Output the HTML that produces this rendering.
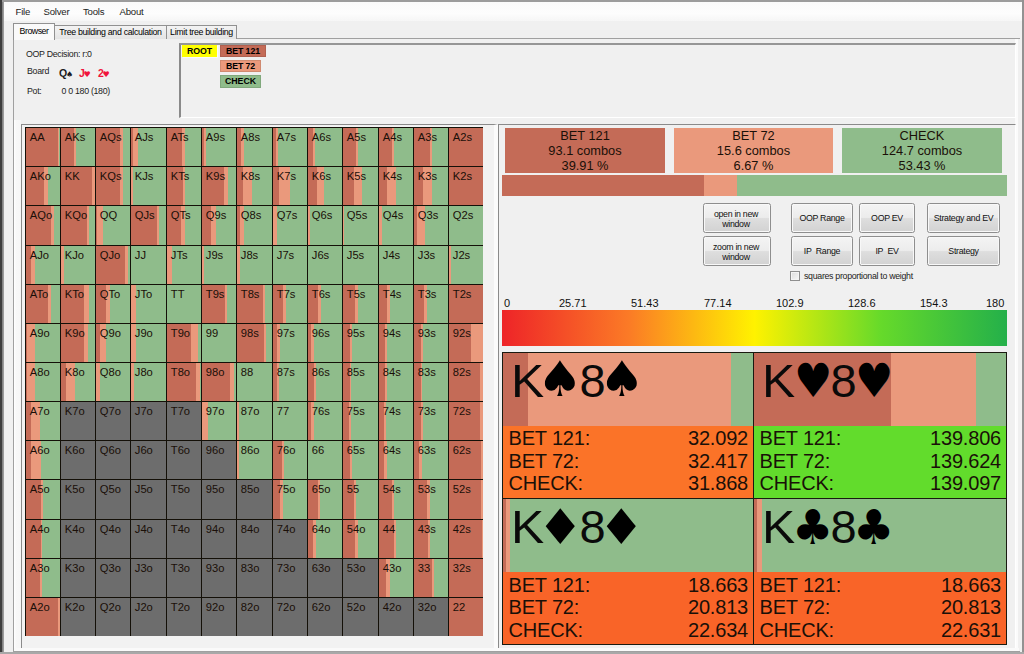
<!DOCTYPE html>
<html><head><meta charset="utf-8"><title>Browser</title>
<style>
html,body{margin:0;padding:0}
body{width:1024px;height:654px;overflow:hidden;background:#f0f0f0;position:relative;font-family:"Liberation Sans",sans-serif;font-size:8.8px;color:#000}
.a{position:absolute}
.t{position:absolute;white-space:nowrap;line-height:12px;letter-spacing:-0.3px;color:#1c1c22}
.m{letter-spacing:-0.2px}
.s{letter-spacing:0;font-size:11px;color:#111}
.c{position:absolute;border-left:1px solid #141008;border-top:1px solid #141008;font-size:11.2px;line-height:13px;padding:2.7px 0 0 3.8px;box-sizing:content-box;overflow:hidden;white-space:nowrap;color:#1a0f08}
.c{box-sizing:border-box}
.btn{position:absolute;border:1px solid #8e8e8e;border-radius:2.5px;background:linear-gradient(#f4f4f4 0,#ececec 48%,#dedede 52%,#d2d2d2 100%);box-shadow:inset 0 0 0 1px #f8f8f8;text-align:center;font-size:8.8px;letter-spacing:-0.3px;line-height:10px;display:flex;align-items:center;justify-content:center;box-sizing:border-box;color:#111}
.sum{position:absolute;text-align:center;font-size:12.8px;line-height:14.7px;box-sizing:border-box;padding-top:1.2px;color:#1a1008}
.hp{position:absolute;border-left:1px solid #1a1a10;border-top:1px solid #1a1a10;box-sizing:border-box}
.hc{position:relative;white-space:nowrap;overflow:hidden}
.hk{position:absolute;top:2.1px;font-size:47px;line-height:52px;transform-origin:0 0;color:#0a0a0a}
.hs{position:absolute;top:0.9px;font-family:"DejaVu Sans",sans-serif;font-size:49px;line-height:52px;transform-origin:0 0;color:#000}
.ev{box-sizing:border-box;padding:1px 5px 0 5.6px;font-size:20px;letter-spacing:-0.2px;line-height:22.65px;color:#1a1008}
.er{display:flex;justify-content:space-between}
.tab{position:absolute;letter-spacing:-0.32px;box-sizing:border-box;border:1px solid #919191;border-bottom:none;background:linear-gradient(#f3f3f3,#e4e4e4);font-size:8.8px;line-height:12px;text-align:center;white-space:nowrap}
.tb{position:absolute;letter-spacing:-0.1px;box-sizing:border-box;font-weight:bold;font-size:8.8px;line-height:11px;text-align:center;white-space:nowrap}
</style></head><body>
<!-- window frame -->
<div class="a" style="left:0;top:0;width:1024px;height:2px;background:#9c9c9c"></div>
<div class="a" style="left:2px;top:2px;width:1020px;height:19px;background:linear-gradient(#fafafa,#fdfdfd 60%,#f6f6f6)"></div>
<div class="a" style="left:0;top:0;width:2px;height:654px;background:#3e3e3e"></div>
<div class="a" style="left:2px;top:2px;width:2px;height:652px;background:linear-gradient(90deg,#777,#a8a8a8)"></div>
<div class="a" style="left:1018px;top:38px;width:2px;height:614px;background:#c2c2c2"></div>
<div class="a" style="left:1022px;top:0;width:2px;height:654px;background:#929292"></div>
<div class="a" style="left:0;top:652px;width:1024px;height:2px;background:#a8a8a8"></div>
<!-- menu -->
<div class="t m" style="left:15.5px;top:5.6px;font-size:9.6px">File</div>
<div class="t m" style="left:43.5px;top:5.6px;font-size:9.6px">Solver</div>
<div class="t m" style="left:83px;top:5.6px;font-size:9.6px">Tools</div>
<div class="t m" style="left:119.5px;top:5.6px;font-size:9.6px">About</div>
<!-- tab page -->
<div class="a" style="left:13px;top:38px;width:1007px;height:614px;border:1px solid #a0a0a0;border-right:none;box-sizing:border-box;background:#f0f0f0"></div>
<div class="a" style="left:14px;top:120px;width:7px;height:531px;background:linear-gradient(90deg,#fff,#f8f8f8 30%,#f6f6f6)"></div>
<div class="a" style="left:1015px;top:39px;width:3px;height:612px;background:#fbfbfb"></div>
<div class="a" style="left:14px;top:648px;width:1005px;height:3px;background:#fafafa"></div>
<div class="tab" style="left:54px;top:25px;width:113px;height:14px;padding-top:0.3px">Tree building and calculation</div>
<div class="tab" style="left:166px;top:25px;width:71px;height:14px;padding-top:0.3px">Limit tree building</div>
<div class="tab" style="left:13px;top:23px;width:42px;height:17px;background:#fafafa;letter-spacing:-0.5px;padding-top:1px">Browser</div>
<!-- info -->
<div class="t" style="left:26px;top:48px">OOP Decision: r:0</div>
<div class="t" style="left:27px;top:65px">Board</div>
<div class="t" style="left:59px;top:67px;font-weight:bold;font-size:10.5px">Q<span style="font-family:'DejaVu Sans',sans-serif;font-size:8px;margin-left:-1px">♠</span></div>
<div class="t" style="left:79px;top:67px;font-weight:bold;font-size:10.5px;color:#f0143c">J<span style="font-family:'DejaVu Sans',sans-serif;font-size:8px;margin-left:-1px">♥</span></div>
<div class="t" style="left:98px;top:67px;font-weight:bold;font-size:10.5px;color:#f0143c">2<span style="font-family:'DejaVu Sans',sans-serif;font-size:8px;margin-left:-1px">♥</span></div>
<div class="t" style="left:27px;top:84.7px">Pot:</div>
<div class="t" style="left:61.5px;top:84.7px">0 0 180 (180)</div>
<!-- tree panel -->
<div class="a" style="left:179px;top:43px;width:837px;height:75px;box-sizing:border-box;border-top:2px solid #969696;border-left:2px solid #8a8a8a;border-right:1px solid #fff;border-bottom:1px solid #fff"></div>
<div class="tb" style="left:182px;top:45px;width:35px;height:12px;background:#ffff00;padding-top:0.5px;box-shadow:1px 1px 0 #fafafa">ROOT</div>
<div class="tb" style="left:220px;top:45px;width:46px;height:12px;background:#c46b57;border:1px solid #b06050;line-height:10px">BET 121</div>
<div class="tb" style="left:220px;top:60px;width:41px;height:12px;background:#ea997c;border:1px solid #d08a70;line-height:10px">BET 72</div>
<div class="tb" style="left:220px;top:75px;width:41px;height:13px;background:#8fbc8b;border:1px solid #80a87c;line-height:11px">CHECK</div>
<!-- grid panel -->
<div class="a" style="left:21px;top:124px;width:477px;height:524px;box-sizing:border-box;border-top:1px solid #8a8a8a;border-left:1px solid #8a8a8a;border-right:4px solid #fbfbfb;background:#f2f2f2"></div>
<div class="c" style="left:25px;top:127px;width:35px;height:39px;background:linear-gradient(90deg,#c46b57 0 93.0%,#ea997c 93.0% 96.5%,#8fbc8b 96.5% 100%)">AA</div>
<div class="c" style="left:60px;top:127px;width:35px;height:39px;background:linear-gradient(90deg,#c46b57 0 38.0%,#ea997c 38.0% 45.0%,#8fbc8b 45.0% 100%)">AKs</div>
<div class="c" style="left:95px;top:127px;width:35px;height:39px;background:linear-gradient(90deg,#c46b57 0 72.0%,#ea997c 72.0% 78.0%,#8fbc8b 78.0% 100%)">AQs</div>
<div class="c" style="left:130px;top:127px;width:36px;height:39px;background:linear-gradient(90deg,#c46b57 0 7.0%,#ea997c 7.0% 19.0%,#8fbc8b 19.0% 100%)">AJs</div>
<div class="c" style="left:166px;top:127px;width:35px;height:39px;background:linear-gradient(90deg,#c46b57 0 44.0%,#ea997c 44.0% 52.0%,#8fbc8b 52.0% 100%)">ATs</div>
<div class="c" style="left:201px;top:127px;width:35px;height:39px;background:linear-gradient(90deg,#c46b57 0 6.0%,#ea997c 6.0% 13.0%,#8fbc8b 13.0% 100%)">A9s</div>
<div class="c" style="left:236px;top:127px;width:36px;height:39px;background:linear-gradient(90deg,#c46b57 0 12.0%,#ea997c 12.0% 20.0%,#8fbc8b 20.0% 100%)">A8s</div>
<div class="c" style="left:272px;top:127px;width:35px;height:39px;background:linear-gradient(90deg,#c46b57 0 8.0%,#ea997c 8.0% 16.0%,#8fbc8b 16.0% 100%)">A7s</div>
<div class="c" style="left:307px;top:127px;width:35px;height:39px;background:linear-gradient(90deg,#c46b57 0 16.0%,#ea997c 16.0% 22.0%,#8fbc8b 22.0% 100%)">A6s</div>
<div class="c" style="left:342px;top:127px;width:36px;height:39px;background:linear-gradient(90deg,#c46b57 0 36.0%,#ea997c 36.0% 43.0%,#8fbc8b 43.0% 100%)">A5s</div>
<div class="c" style="left:378px;top:127px;width:35px;height:39px;background:linear-gradient(90deg,#c46b57 0 38.0%,#ea997c 38.0% 45.0%,#8fbc8b 45.0% 100%)">A4s</div>
<div class="c" style="left:413px;top:127px;width:35px;height:39px;background:linear-gradient(90deg,#c46b57 0 47.0%,#ea997c 47.0% 54.0%,#8fbc8b 54.0% 100%)">A3s</div>
<div class="c" style="left:448px;top:127px;width:35px;height:39px;background:#c46b57">A2s</div>
<div class="c" style="left:25px;top:166px;width:35px;height:39px;background:linear-gradient(90deg,#c46b57 0 54.0%,#ea997c 54.0% 64.0%,#8fbc8b 64.0% 100%)">AKo</div>
<div class="c" style="left:60px;top:166px;width:35px;height:39px;background:linear-gradient(90deg,#c46b57 0 90.0%,#ea997c 90.0% 100.0%)">KK</div>
<div class="c" style="left:95px;top:166px;width:35px;height:39px;background:linear-gradient(90deg,#c46b57 0 72.0%,#ea997c 72.0% 80.0%,#8fbc8b 80.0% 100%)">KQs</div>
<div class="c" style="left:130px;top:166px;width:36px;height:39px;background:linear-gradient(90deg,#ea997c 0.0% 6.0%,#8fbc8b 6.0% 100%)">KJs</div>
<div class="c" style="left:166px;top:166px;width:35px;height:39px;background:linear-gradient(90deg,#c46b57 0 47.0%,#ea997c 47.0% 54.0%,#8fbc8b 54.0% 100%)">KTs</div>
<div class="c" style="left:201px;top:166px;width:35px;height:39px;background:linear-gradient(90deg,#c46b57 0 64.0%,#ea997c 64.0% 76.0%,#8fbc8b 76.0% 100%)">K9s</div>
<div class="c" style="left:236px;top:166px;width:36px;height:39px;background:linear-gradient(90deg,#c46b57 0 16.0%,#ea997c 16.0% 43.0%,#8fbc8b 43.0% 100%)">K8s</div>
<div class="c" style="left:272px;top:166px;width:35px;height:39px;background:linear-gradient(90deg,#c46b57 0 18.0%,#ea997c 18.0% 50.0%,#8fbc8b 50.0% 100%)">K7s</div>
<div class="c" style="left:307px;top:166px;width:35px;height:39px;background:linear-gradient(90deg,#c46b57 0 26.0%,#ea997c 26.0% 48.0%,#8fbc8b 48.0% 100%)">K6s</div>
<div class="c" style="left:342px;top:166px;width:36px;height:39px;background:linear-gradient(90deg,#c46b57 0 32.0%,#ea997c 32.0% 53.0%,#8fbc8b 53.0% 100%)">K5s</div>
<div class="c" style="left:378px;top:166px;width:35px;height:39px;background:linear-gradient(90deg,#c46b57 0 25.0%,#ea997c 25.0% 50.0%,#8fbc8b 50.0% 100%)">K4s</div>
<div class="c" style="left:413px;top:166px;width:35px;height:39px;background:linear-gradient(90deg,#c46b57 0 25.0%,#ea997c 25.0% 52.0%,#8fbc8b 52.0% 100%)">K3s</div>
<div class="c" style="left:448px;top:166px;width:35px;height:39px;background:#c46b57">K2s</div>
<div class="c" style="left:25px;top:205px;width:35px;height:40px;background:linear-gradient(90deg,#c46b57 0 75.0%,#ea997c 75.0% 82.0%,#8fbc8b 82.0% 100%)">AQo</div>
<div class="c" style="left:60px;top:205px;width:35px;height:40px;background:linear-gradient(90deg,#c46b57 0 76.0%,#ea997c 76.0% 83.0%,#8fbc8b 83.0% 100%)">KQo</div>
<div class="c" style="left:95px;top:205px;width:35px;height:40px;background:linear-gradient(90deg,#c46b57 0 3.0%,#ea997c 3.0% 22.0%,#8fbc8b 22.0% 100%)">QQ</div>
<div class="c" style="left:130px;top:205px;width:36px;height:40px;background:linear-gradient(90deg,#c46b57 0 74.0%,#ea997c 74.0% 81.0%,#8fbc8b 81.0% 100%)">QJs</div>
<div class="c" style="left:166px;top:205px;width:35px;height:40px;background:linear-gradient(90deg,#c46b57 0 40.0%,#ea997c 40.0% 54.0%,#8fbc8b 54.0% 100%)">QTs</div>
<div class="c" style="left:201px;top:205px;width:35px;height:40px;background:linear-gradient(90deg,#c46b57 0 26.0%,#ea997c 26.0% 40.0%,#8fbc8b 40.0% 100%)">Q9s</div>
<div class="c" style="left:236px;top:205px;width:36px;height:40px;background:linear-gradient(90deg,#c46b57 0 10.0%,#ea997c 10.0% 19.0%,#8fbc8b 19.0% 100%)">Q8s</div>
<div class="c" style="left:272px;top:205px;width:35px;height:40px;background:linear-gradient(90deg,#c46b57 0 1.0%,#ea997c 1.0% 11.0%,#8fbc8b 11.0% 100%)">Q7s</div>
<div class="c" style="left:307px;top:205px;width:35px;height:40px;background:linear-gradient(90deg,#ea997c 0.0% 5.0%,#8fbc8b 5.0% 100%)">Q6s</div>
<div class="c" style="left:342px;top:205px;width:36px;height:40px;background:linear-gradient(90deg,#ea997c 0.0% 4.0%,#8fbc8b 4.0% 100%)">Q5s</div>
<div class="c" style="left:378px;top:205px;width:35px;height:40px;background:linear-gradient(90deg,#ea997c 0.0% 9.0%,#8fbc8b 9.0% 100%)">Q4s</div>
<div class="c" style="left:413px;top:205px;width:35px;height:40px;background:linear-gradient(90deg,#c46b57 0 9.0%,#ea997c 9.0% 32.0%,#8fbc8b 32.0% 100%)">Q3s</div>
<div class="c" style="left:448px;top:205px;width:35px;height:40px;background:#8fbc8b">Q2s</div>
<div class="c" style="left:25px;top:245px;width:35px;height:39px;background:linear-gradient(90deg,#c46b57 0 15.0%,#ea997c 15.0% 27.0%,#8fbc8b 27.0% 100%)">AJo</div>
<div class="c" style="left:60px;top:245px;width:35px;height:39px;background:linear-gradient(90deg,#ea997c 0.0% 10.0%,#8fbc8b 10.0% 100%)">KJo</div>
<div class="c" style="left:95px;top:245px;width:35px;height:39px;background:linear-gradient(90deg,#c46b57 0 86.0%,#ea997c 86.0% 95.0%,#8fbc8b 95.0% 100%)">QJo</div>
<div class="c" style="left:130px;top:245px;width:36px;height:39px;background:#8fbc8b">JJ</div>
<div class="c" style="left:166px;top:245px;width:35px;height:39px;background:linear-gradient(90deg,#ea997c 0.0% 15.0%,#8fbc8b 15.0% 100%)">JTs</div>
<div class="c" style="left:201px;top:245px;width:35px;height:39px;background:linear-gradient(90deg,#ea997c 0.0% 5.0%,#8fbc8b 5.0% 100%)">J9s</div>
<div class="c" style="left:236px;top:245px;width:36px;height:39px;background:linear-gradient(90deg,#ea997c 0.0% 7.5%,#8fbc8b 7.5% 100%)">J8s</div>
<div class="c" style="left:272px;top:245px;width:35px;height:39px;background:#8fbc8b">J7s</div>
<div class="c" style="left:307px;top:245px;width:35px;height:39px;background:#8fbc8b">J6s</div>
<div class="c" style="left:342px;top:245px;width:36px;height:39px;background:#8fbc8b">J5s</div>
<div class="c" style="left:378px;top:245px;width:35px;height:39px;background:#8fbc8b">J4s</div>
<div class="c" style="left:413px;top:245px;width:35px;height:39px;background:#8fbc8b">J3s</div>
<div class="c" style="left:448px;top:245px;width:35px;height:39px;background:linear-gradient(90deg,#ea997c 0.0% 7.0%,#8fbc8b 7.0% 100%)">J2s</div>
<div class="c" style="left:25px;top:284px;width:35px;height:39px;background:linear-gradient(90deg,#c46b57 0 66.0%,#ea997c 66.0% 74.0%,#8fbc8b 74.0% 100%)">ATo</div>
<div class="c" style="left:60px;top:284px;width:35px;height:39px;background:linear-gradient(90deg,#c46b57 0 69.0%,#ea997c 69.0% 81.0%,#8fbc8b 81.0% 100%)">KTo</div>
<div class="c" style="left:95px;top:284px;width:35px;height:39px;background:linear-gradient(90deg,#c46b57 0 30.0%,#ea997c 30.0% 40.0%,#8fbc8b 40.0% 100%)">QTo</div>
<div class="c" style="left:130px;top:284px;width:36px;height:39px;background:linear-gradient(90deg,#ea997c 0.0% 15.0%,#8fbc8b 15.0% 100%)">JTo</div>
<div class="c" style="left:166px;top:284px;width:35px;height:39px;background:#8fbc8b">TT</div>
<div class="c" style="left:201px;top:284px;width:35px;height:39px;background:linear-gradient(90deg,#c46b57 0 68.0%,#ea997c 68.0% 75.0%,#8fbc8b 75.0% 100%)">T9s</div>
<div class="c" style="left:236px;top:284px;width:36px;height:39px;background:linear-gradient(90deg,#c46b57 0 74.0%,#ea997c 74.0% 81.0%,#8fbc8b 81.0% 100%)">T8s</div>
<div class="c" style="left:272px;top:284px;width:35px;height:39px;background:linear-gradient(90deg,#c46b57 0 29.0%,#ea997c 29.0% 39.0%,#8fbc8b 39.0% 100%)">T7s</div>
<div class="c" style="left:307px;top:284px;width:35px;height:39px;background:linear-gradient(90deg,#c46b57 0 30.0%,#ea997c 30.0% 37.0%,#8fbc8b 37.0% 100%)">T6s</div>
<div class="c" style="left:342px;top:284px;width:36px;height:39px;background:linear-gradient(90deg,#c46b57 0 34.0%,#ea997c 34.0% 42.0%,#8fbc8b 42.0% 100%)">T5s</div>
<div class="c" style="left:378px;top:284px;width:35px;height:39px;background:linear-gradient(90deg,#c46b57 0 24.0%,#ea997c 24.0% 32.0%,#8fbc8b 32.0% 100%)">T4s</div>
<div class="c" style="left:413px;top:284px;width:35px;height:39px;background:linear-gradient(90deg,#c46b57 0 28.0%,#ea997c 28.0% 37.0%,#8fbc8b 37.0% 100%)">T3s</div>
<div class="c" style="left:448px;top:284px;width:35px;height:39px;background:#c46b57">T2s</div>
<div class="c" style="left:25px;top:323px;width:35px;height:39px;background:linear-gradient(90deg,#c46b57 0 4.0%,#ea997c 4.0% 27.0%,#8fbc8b 27.0% 100%)">A9o</div>
<div class="c" style="left:60px;top:323px;width:35px;height:39px;background:linear-gradient(90deg,#c46b57 0 67.0%,#ea997c 67.0% 79.0%,#8fbc8b 79.0% 100%)">K9o</div>
<div class="c" style="left:95px;top:323px;width:35px;height:39px;background:linear-gradient(90deg,#c46b57 0 12.0%,#ea997c 12.0% 28.0%,#8fbc8b 28.0% 100%)">Q9o</div>
<div class="c" style="left:130px;top:323px;width:36px;height:39px;background:linear-gradient(90deg,#ea997c 0.0% 13.0%,#8fbc8b 13.0% 100%)">J9o</div>
<div class="c" style="left:166px;top:323px;width:35px;height:39px;background:linear-gradient(90deg,#c46b57 0 70.0%,#ea997c 70.0% 90.0%,#8fbc8b 90.0% 100%)">T9o</div>
<div class="c" style="left:201px;top:323px;width:35px;height:39px;background:#8fbc8b">99</div>
<div class="c" style="left:236px;top:323px;width:36px;height:39px;background:linear-gradient(90deg,#c46b57 0 76.0%,#ea997c 76.0% 84.0%,#8fbc8b 84.0% 100%)">98s</div>
<div class="c" style="left:272px;top:323px;width:35px;height:39px;background:linear-gradient(90deg,#c46b57 0 13.0%,#ea997c 13.0% 21.0%,#8fbc8b 21.0% 100%)">97s</div>
<div class="c" style="left:307px;top:323px;width:35px;height:39px;background:linear-gradient(90deg,#c46b57 0 9.0%,#ea997c 9.0% 17.0%,#8fbc8b 17.0% 100%)">96s</div>
<div class="c" style="left:342px;top:323px;width:36px;height:39px;background:linear-gradient(90deg,#c46b57 0 21.0%,#ea997c 21.0% 27.0%,#8fbc8b 27.0% 100%)">95s</div>
<div class="c" style="left:378px;top:323px;width:35px;height:39px;background:linear-gradient(90deg,#c46b57 0 17.0%,#ea997c 17.0% 23.0%,#8fbc8b 23.0% 100%)">94s</div>
<div class="c" style="left:413px;top:323px;width:35px;height:39px;background:linear-gradient(90deg,#c46b57 0 21.0%,#ea997c 21.0% 25.0%,#8fbc8b 25.0% 100%)">93s</div>
<div class="c" style="left:448px;top:323px;width:35px;height:39px;background:linear-gradient(90deg,#c46b57 0 65.0%,#ea997c 65.0% 100.0%)">92s</div>
<div class="c" style="left:25px;top:362px;width:35px;height:39px;background:linear-gradient(90deg,#c46b57 0 2.0%,#ea997c 2.0% 26.0%,#8fbc8b 26.0% 100%)">A8o</div>
<div class="c" style="left:60px;top:362px;width:35px;height:39px;background:linear-gradient(90deg,#c46b57 0 15.0%,#ea997c 15.0% 40.0%,#8fbc8b 40.0% 100%)">K8o</div>
<div class="c" style="left:95px;top:362px;width:35px;height:39px;background:linear-gradient(90deg,#ea997c 0.0% 12.0%,#8fbc8b 12.0% 100%)">Q8o</div>
<div class="c" style="left:130px;top:362px;width:36px;height:39px;background:linear-gradient(90deg,#ea997c 0.0% 8.0%,#8fbc8b 8.0% 100%)">J8o</div>
<div class="c" style="left:166px;top:362px;width:35px;height:39px;background:linear-gradient(90deg,#c46b57 0 86.0%,#ea997c 86.0% 98.0%,#8fbc8b 98.0% 100%)">T8o</div>
<div class="c" style="left:201px;top:362px;width:35px;height:39px;background:linear-gradient(90deg,#c46b57 0 81.0%,#ea997c 81.0% 93.0%,#8fbc8b 93.0% 100%)">98o</div>
<div class="c" style="left:236px;top:362px;width:36px;height:39px;background:#8fbc8b">88</div>
<div class="c" style="left:272px;top:362px;width:35px;height:39px;background:linear-gradient(90deg,#c46b57 0 13.0%,#ea997c 13.0% 17.0%,#8fbc8b 17.0% 100%)">87s</div>
<div class="c" style="left:307px;top:362px;width:35px;height:39px;background:linear-gradient(90deg,#c46b57 0 18.0%,#ea997c 18.0% 23.0%,#8fbc8b 23.0% 100%)">86s</div>
<div class="c" style="left:342px;top:362px;width:36px;height:39px;background:linear-gradient(90deg,#c46b57 0 20.0%,#ea997c 20.0% 24.0%,#8fbc8b 24.0% 100%)">85s</div>
<div class="c" style="left:378px;top:362px;width:35px;height:39px;background:linear-gradient(90deg,#c46b57 0 19.0%,#ea997c 19.0% 23.0%,#8fbc8b 23.0% 100%)">84s</div>
<div class="c" style="left:413px;top:362px;width:35px;height:39px;background:linear-gradient(90deg,#c46b57 0 21.0%,#ea997c 21.0% 24.0%,#8fbc8b 24.0% 100%)">83s</div>
<div class="c" style="left:448px;top:362px;width:35px;height:39px;background:linear-gradient(90deg,#c46b57 0 90.0%,#ea997c 90.0% 100.0%)">82s</div>
<div class="c" style="left:25px;top:401px;width:35px;height:39px;background:linear-gradient(90deg,#c46b57 0 14.0%,#ea997c 14.0% 41.0%,#8fbc8b 41.0% 100%)">A7o</div>
<div class="c" style="left:60px;top:401px;width:35px;height:39px;background:#6d6d6d">K7o</div>
<div class="c" style="left:95px;top:401px;width:35px;height:39px;background:#6d6d6d">Q7o</div>
<div class="c" style="left:130px;top:401px;width:36px;height:39px;background:#6d6d6d">J7o</div>
<div class="c" style="left:166px;top:401px;width:35px;height:39px;background:#6d6d6d">T7o</div>
<div class="c" style="left:201px;top:401px;width:35px;height:39px;background:linear-gradient(90deg,#ea997c 0.0% 17.0%,#8fbc8b 17.0% 100%)">97o</div>
<div class="c" style="left:236px;top:401px;width:36px;height:39px;background:linear-gradient(90deg,#ea997c 0.0% 5.0%,#8fbc8b 5.0% 100%)">87o</div>
<div class="c" style="left:272px;top:401px;width:35px;height:39px;background:#8fbc8b">77</div>
<div class="c" style="left:307px;top:401px;width:35px;height:39px;background:linear-gradient(90deg,#c46b57 0 9.0%,#ea997c 9.0% 18.0%,#8fbc8b 18.0% 100%)">76s</div>
<div class="c" style="left:342px;top:401px;width:36px;height:39px;background:linear-gradient(90deg,#c46b57 0 16.0%,#ea997c 16.0% 22.0%,#8fbc8b 22.0% 100%)">75s</div>
<div class="c" style="left:378px;top:401px;width:35px;height:39px;background:linear-gradient(90deg,#c46b57 0 14.0%,#ea997c 14.0% 22.0%,#8fbc8b 22.0% 100%)">74s</div>
<div class="c" style="left:413px;top:401px;width:35px;height:39px;background:linear-gradient(90deg,#c46b57 0 20.0%,#ea997c 20.0% 25.0%,#8fbc8b 25.0% 100%)">73s</div>
<div class="c" style="left:448px;top:401px;width:35px;height:39px;background:linear-gradient(90deg,#c46b57 0 92.0%,#ea997c 92.0% 100.0%)">72s</div>
<div class="c" style="left:25px;top:440px;width:35px;height:39px;background:linear-gradient(90deg,#c46b57 0 14.0%,#ea997c 14.0% 44.0%,#8fbc8b 44.0% 100%)">A6o</div>
<div class="c" style="left:60px;top:440px;width:35px;height:39px;background:#6d6d6d">K6o</div>
<div class="c" style="left:95px;top:440px;width:35px;height:39px;background:#6d6d6d">Q6o</div>
<div class="c" style="left:130px;top:440px;width:36px;height:39px;background:#6d6d6d">J6o</div>
<div class="c" style="left:166px;top:440px;width:35px;height:39px;background:#6d6d6d">T6o</div>
<div class="c" style="left:201px;top:440px;width:35px;height:39px;background:#6d6d6d">96o</div>
<div class="c" style="left:236px;top:440px;width:36px;height:39px;background:linear-gradient(90deg,#ea997c 0.0% 5.0%,#8fbc8b 5.0% 100%)">86o</div>
<div class="c" style="left:272px;top:440px;width:35px;height:39px;background:linear-gradient(90deg,#c46b57 0 27.0%,#ea997c 27.0% 33.0%,#8fbc8b 33.0% 100%)">76o</div>
<div class="c" style="left:307px;top:440px;width:35px;height:39px;background:#8fbc8b">66</div>
<div class="c" style="left:342px;top:440px;width:36px;height:39px;background:linear-gradient(90deg,#c46b57 0 20.0%,#ea997c 20.0% 27.0%,#8fbc8b 27.0% 100%)">65s</div>
<div class="c" style="left:378px;top:440px;width:35px;height:39px;background:linear-gradient(90deg,#c46b57 0 16.0%,#ea997c 16.0% 23.0%,#8fbc8b 23.0% 100%)">64s</div>
<div class="c" style="left:413px;top:440px;width:35px;height:39px;background:linear-gradient(90deg,#c46b57 0 14.0%,#ea997c 14.0% 23.0%,#8fbc8b 23.0% 100%)">63s</div>
<div class="c" style="left:448px;top:440px;width:35px;height:39px;background:linear-gradient(90deg,#c46b57 0 93.0%,#ea997c 93.0% 100.0%)">62s</div>
<div class="c" style="left:25px;top:479px;width:35px;height:40px;background:linear-gradient(90deg,#c46b57 0 43.0%,#ea997c 43.0% 49.0%,#8fbc8b 49.0% 100%)">A5o</div>
<div class="c" style="left:60px;top:479px;width:35px;height:40px;background:#6d6d6d">K5o</div>
<div class="c" style="left:95px;top:479px;width:35px;height:40px;background:#6d6d6d">Q5o</div>
<div class="c" style="left:130px;top:479px;width:36px;height:40px;background:#6d6d6d">J5o</div>
<div class="c" style="left:166px;top:479px;width:35px;height:40px;background:#6d6d6d">T5o</div>
<div class="c" style="left:201px;top:479px;width:35px;height:40px;background:#6d6d6d">95o</div>
<div class="c" style="left:236px;top:479px;width:36px;height:40px;background:#6d6d6d">85o</div>
<div class="c" style="left:272px;top:479px;width:35px;height:40px;background:linear-gradient(90deg,#c46b57 0 22.0%,#ea997c 22.0% 28.0%,#8fbc8b 28.0% 100%)">75o</div>
<div class="c" style="left:307px;top:479px;width:35px;height:40px;background:linear-gradient(90deg,#c46b57 0 28.0%,#ea997c 28.0% 35.0%,#8fbc8b 35.0% 100%)">65o</div>
<div class="c" style="left:342px;top:479px;width:36px;height:40px;background:linear-gradient(90deg,#c46b57 0 32.0%,#ea997c 32.0% 38.0%,#8fbc8b 38.0% 100%)">55</div>
<div class="c" style="left:378px;top:479px;width:35px;height:40px;background:linear-gradient(90deg,#c46b57 0 37.0%,#ea997c 37.0% 45.0%,#8fbc8b 45.0% 100%)">54s</div>
<div class="c" style="left:413px;top:479px;width:35px;height:40px;background:linear-gradient(90deg,#c46b57 0 39.0%,#ea997c 39.0% 47.0%,#8fbc8b 47.0% 100%)">53s</div>
<div class="c" style="left:448px;top:479px;width:35px;height:40px;background:linear-gradient(90deg,#c46b57 0 95.0%,#ea997c 95.0% 100.0%)">52s</div>
<div class="c" style="left:25px;top:519px;width:35px;height:39px;background:linear-gradient(90deg,#c46b57 0 43.0%,#ea997c 43.0% 48.0%,#8fbc8b 48.0% 100%)">A4o</div>
<div class="c" style="left:60px;top:519px;width:35px;height:39px;background:#6d6d6d">K4o</div>
<div class="c" style="left:95px;top:519px;width:35px;height:39px;background:#6d6d6d">Q4o</div>
<div class="c" style="left:130px;top:519px;width:36px;height:39px;background:#6d6d6d">J4o</div>
<div class="c" style="left:166px;top:519px;width:35px;height:39px;background:#6d6d6d">T4o</div>
<div class="c" style="left:201px;top:519px;width:35px;height:39px;background:#6d6d6d">94o</div>
<div class="c" style="left:236px;top:519px;width:36px;height:39px;background:#6d6d6d">84o</div>
<div class="c" style="left:272px;top:519px;width:35px;height:39px;background:#6d6d6d">74o</div>
<div class="c" style="left:307px;top:519px;width:35px;height:39px;background:linear-gradient(90deg,#c46b57 0 16.0%,#ea997c 16.0% 23.0%,#8fbc8b 23.0% 100%)">64o</div>
<div class="c" style="left:342px;top:519px;width:36px;height:39px;background:linear-gradient(90deg,#c46b57 0 35.0%,#ea997c 35.0% 42.0%,#8fbc8b 42.0% 100%)">54o</div>
<div class="c" style="left:378px;top:519px;width:35px;height:39px;background:linear-gradient(90deg,#c46b57 0 44.0%,#ea997c 44.0% 49.0%,#8fbc8b 49.0% 100%)">44</div>
<div class="c" style="left:413px;top:519px;width:35px;height:39px;background:linear-gradient(90deg,#c46b57 0 40.0%,#ea997c 40.0% 47.0%,#8fbc8b 47.0% 100%)">43s</div>
<div class="c" style="left:448px;top:519px;width:35px;height:39px;background:linear-gradient(90deg,#c46b57 0 96.0%,#ea997c 96.0% 100.0%)">42s</div>
<div class="c" style="left:25px;top:558px;width:35px;height:39px;background:linear-gradient(90deg,#c46b57 0 42.0%,#ea997c 42.0% 47.0%,#8fbc8b 47.0% 100%)">A3o</div>
<div class="c" style="left:60px;top:558px;width:35px;height:39px;background:#6d6d6d">K3o</div>
<div class="c" style="left:95px;top:558px;width:35px;height:39px;background:#6d6d6d">Q3o</div>
<div class="c" style="left:130px;top:558px;width:36px;height:39px;background:#6d6d6d">J3o</div>
<div class="c" style="left:166px;top:558px;width:35px;height:39px;background:#6d6d6d">T3o</div>
<div class="c" style="left:201px;top:558px;width:35px;height:39px;background:#6d6d6d">93o</div>
<div class="c" style="left:236px;top:558px;width:36px;height:39px;background:#6d6d6d">83o</div>
<div class="c" style="left:272px;top:558px;width:35px;height:39px;background:#6d6d6d">73o</div>
<div class="c" style="left:307px;top:558px;width:35px;height:39px;background:#6d6d6d">63o</div>
<div class="c" style="left:342px;top:558px;width:36px;height:39px;background:#6d6d6d">53o</div>
<div class="c" style="left:378px;top:558px;width:35px;height:39px;background:linear-gradient(90deg,#c46b57 0 21.0%,#ea997c 21.0% 33.0%,#8fbc8b 33.0% 100%)">43o</div>
<div class="c" style="left:413px;top:558px;width:35px;height:39px;background:linear-gradient(90deg,#c46b57 0 53.0%,#ea997c 53.0% 58.0%,#8fbc8b 58.0% 100%)">33</div>
<div class="c" style="left:448px;top:558px;width:35px;height:39px;background:#c46b57">32s</div>
<div class="c" style="left:25px;top:597px;width:35px;height:39px;background:linear-gradient(90deg,#c46b57 0 94.0%,#ea997c 94.0% 100.0%)">A2o</div>
<div class="c" style="left:60px;top:597px;width:35px;height:39px;background:#6d6d6d">K2o</div>
<div class="c" style="left:95px;top:597px;width:35px;height:39px;background:#6d6d6d">Q2o</div>
<div class="c" style="left:130px;top:597px;width:36px;height:39px;background:#6d6d6d">J2o</div>
<div class="c" style="left:166px;top:597px;width:35px;height:39px;background:#6d6d6d">T2o</div>
<div class="c" style="left:201px;top:597px;width:35px;height:39px;background:#6d6d6d">92o</div>
<div class="c" style="left:236px;top:597px;width:36px;height:39px;background:#6d6d6d">82o</div>
<div class="c" style="left:272px;top:597px;width:35px;height:39px;background:#6d6d6d">72o</div>
<div class="c" style="left:307px;top:597px;width:35px;height:39px;background:#6d6d6d">62o</div>
<div class="c" style="left:342px;top:597px;width:36px;height:39px;background:#6d6d6d">52o</div>
<div class="c" style="left:378px;top:597px;width:35px;height:39px;background:#6d6d6d">42o</div>
<div class="c" style="left:413px;top:597px;width:35px;height:39px;background:#6d6d6d">32o</div>
<div class="c" style="left:448px;top:597px;width:35px;height:39px;background:#c46b57">22</div>
<!-- right panel -->
<div class="a" style="left:498px;top:124px;width:518px;height:524px;box-sizing:border-box;border-top:1px solid #8a8a8a;border-left:1px solid #8a8a8a;border-right:1px solid #fff"></div>
<div class="sum" style="left:505px;top:128px;width:160px;height:45px;background:#c46b57">BET 121<br>93.1 combos<br>39.91 %</div>
<div class="sum" style="left:674px;top:128px;width:159px;height:45px;background:#ea997c">BET 72<br>15.6 combos<br>6.67 %</div>
<div class="sum" style="left:842px;top:128px;width:160px;height:45px;background:#8fbc8b">CHECK<br>124.7 combos<br>53.43 %</div>
<div class="a" style="left:502px;top:175px;width:505px;height:21px;background:linear-gradient(90deg,#c46b57 0 39.91%,#ea997c 39.91% 46.58%,#8fbc8b 46.58% 100%)"></div>
<div class="btn" style="left:703px;top:203px;width:68px;height:30px;padding-right:2px;padding-top:1px">open in new<br>window</div>
<div class="btn" style="left:703px;top:236px;width:68px;height:30px;padding-right:2px;padding-top:1px">zoom in new<br>window</div>
<div class="btn" style="left:791px;top:203px;width:62px;height:30px">OOP Range</div>
<div class="btn" style="left:791px;top:236px;width:62px;height:30px">IP&nbsp; Range</div>
<div class="btn" style="left:859px;top:203px;width:56px;height:30px">OOP EV</div>
<div class="btn" style="left:859px;top:236px;width:56px;height:30px">IP&nbsp; EV</div>
<div class="btn" style="left:927px;top:203px;width:73px;height:30px">Strategy and EV</div>
<div class="btn" style="left:927px;top:236px;width:73px;height:30px">Strategy</div>
<div class="a" style="left:790px;top:271px;width:10px;height:10px;box-sizing:border-box;border:1px solid #8e8e8e;background:linear-gradient(135deg,#dcdcdc,#f8f8f8);box-shadow:inset 0 0 0 1px #f4f4f4"></div>
<div class="t" style="left:804px;top:270px">squares proportional to weight</div>
<!-- scale -->
<div class="t s" style="left:504px;top:297px">0</div>
<div class="t s" style="left:559px;top:297px">25.71</div>
<div class="t s" style="left:631px;top:297px">51.43</div>
<div class="t s" style="left:704px;top:297px">77.14</div>
<div class="t s" style="left:776px;top:297px">102.9</div>
<div class="t s" style="left:848px;top:297px">128.6</div>
<div class="t s" style="left:920px;top:297px">154.3</div>
<div class="t s" style="left:986px;top:297px">180</div>
<div class="a" style="left:502px;top:310px;width:505px;height:36px;background:linear-gradient(90deg,#ee2428 0,#fb7a26 25%,#fff200 50%,#66da2a 75%,#24b04a 100%)"></div>
<!-- hand panels -->
<div class="hp" style="left:502px;top:352px;width:251px"><div class="hc" style="height:73px;background:linear-gradient(90deg,#c46b57 0 10.1%,#ea997c 10.1% 91.1%,#8fbc8b 91.1% 100%)"><span class="hk" style="left:7.6px;transform:scaleX(1.06)">K</span><span class="hs" style="left:33.6px;top:0.9px;font-size:49px;transform:scaleX(1.05)">♠</span><span class="hk" style="left:76.4px">8</span><span class="hs" style="left:95.6px;top:0.9px;font-size:49px;transform:scaleX(1.05)">♠</span></div><div class="ev" style="height:73px;padding-top:1px;background:#fb7328"><div class="er"><span>BET 121:</span><span>32.092</span></div><div class="er"><span>BET 72:</span><span>32.417</span></div><div class="er"><span>CHECK:</span><span>31.868</span></div></div></div>
<div class="hp" style="left:753px;top:352px;width:253px"><div class="hc" style="height:73px;background:linear-gradient(90deg,#c46b57 0 54.2%,#ea997c 54.2% 88.2%,#8fbc8b 88.2% 100%)"><span class="hk" style="left:7.6px;transform:scaleX(1.06)">K</span><span class="hs" style="left:39.6px;top:1.6px;font-size:47px;transform:scaleX(0.91)">♥</span><span class="hk" style="left:76.4px">8</span><span class="hs" style="left:100.8px;top:1.6px;font-size:47px;transform:scaleX(0.91)">♥</span></div><div class="ev" style="height:73px;padding-top:1px;background:#62dc2c"><div class="er"><span>BET 121:</span><span>139.806</span></div><div class="er"><span>BET 72:</span><span>139.624</span></div><div class="er"><span>CHECK:</span><span>139.097</span></div></div></div>
<div class="hp" style="left:502px;top:498px;width:251px"><div class="hc" style="height:73px;background:linear-gradient(90deg,#c46b57 0 1.2%,#ea997c 1.2% 3.0%,#8fbc8b 3.0% 100%)"><span class="hk" style="left:7.6px;transform:scaleX(1.06)">K</span><span class="hs" style="left:33.8px;top:3.4px;font-size:49px;transform:scaleX(1.06)">♦</span><span class="hk" style="left:76.4px">8</span><span class="hs" style="left:95.0px;top:3.4px;font-size:49px;transform:scaleX(1.06)">♦</span></div><div class="ev" style="height:73px;padding-top:1.7px;background:#f96428"><div class="er"><span>BET 121:</span><span>18.663</span></div><div class="er"><span>BET 72:</span><span>20.813</span></div><div class="er"><span>CHECK:</span><span>22.634</span></div></div></div>
<div class="hp" style="left:753px;top:498px;width:253px"><div class="hc" style="height:73px;background:linear-gradient(90deg,#c46b57 0 1.2%,#ea997c 1.2% 3.0%,#8fbc8b 3.0% 100%)"><span class="hk" style="left:7.6px;transform:scaleX(1.06)">K</span><span class="hs" style="left:38.3px;top:1.7px;font-size:48px;transform:scaleX(0.96)">♣</span><span class="hk" style="left:76.4px">8</span><span class="hs" style="left:98.9px;top:1.7px;font-size:48px;transform:scaleX(0.96)">♣</span></div><div class="ev" style="height:73px;padding-top:1.7px;background:#f96428"><div class="er"><span>BET 121:</span><span>18.663</span></div><div class="er"><span>BET 72:</span><span>20.813</span></div><div class="er"><span>CHECK:</span><span>22.631</span></div></div></div>
<div class="a" style="left:1006px;top:352px;width:1px;height:293px;background:#1a1a10"></div>
<div class="a" style="left:502px;top:644px;width:505px;height:1px;background:#1a1a10"></div>
</body></html>
